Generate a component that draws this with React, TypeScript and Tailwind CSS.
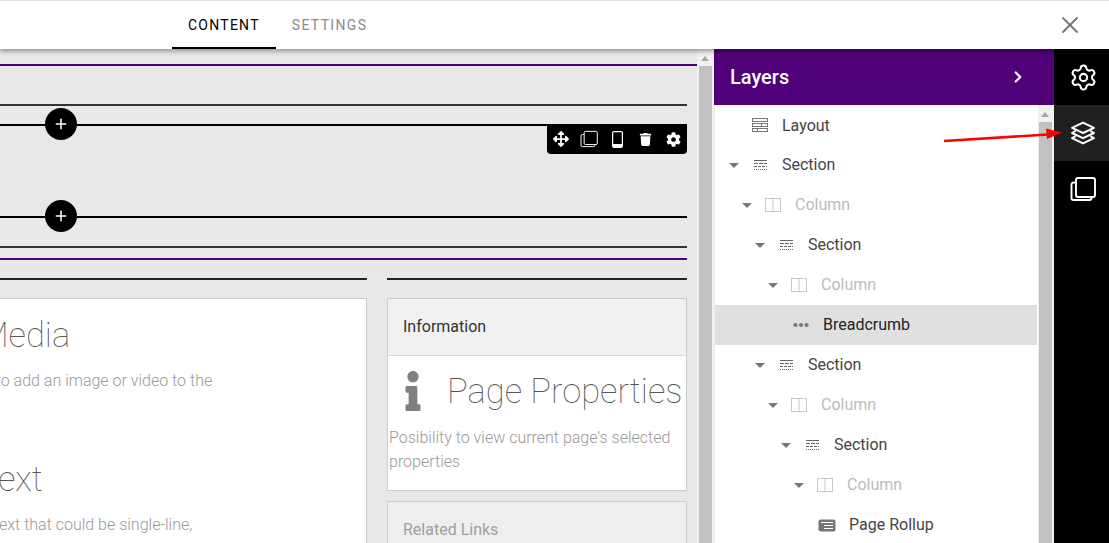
import React from 'react';
import { ChevronRight, Plus, Settings, X } from 'lucide-react';
import { FaArrowsAlt, FaCog, FaInfo, FaTrash } from 'react-icons/fa';

type Kind = 'layout' | 'section' | 'column' | 'breadcrumb' | 'rollup';

const rows: { label: string; kind: Kind; depth: number; caret?: boolean; active?: boolean }[] = [
  { label: 'Layout', kind: 'layout', depth: 0 },
  { label: 'Section', kind: 'section', depth: 0, caret: true },
  { label: 'Column', kind: 'column', depth: 1, caret: true },
  { label: 'Section', kind: 'section', depth: 2, caret: true },
  { label: 'Column', kind: 'column', depth: 3, caret: true },
  { label: 'Breadcrumb', kind: 'breadcrumb', depth: 3, active: true },
  { label: 'Section', kind: 'section', depth: 2, caret: true },
  { label: 'Column', kind: 'column', depth: 3, caret: true },
  { label: 'Section', kind: 'section', depth: 4, caret: true },
  { label: 'Column', kind: 'column', depth: 5, caret: true },
  { label: 'Page Rollup', kind: 'rollup', depth: 5 },
];

function TreeIcon({ kind }: { kind: Kind }) {
  if (kind === 'layout') {
    return (
      <svg width="16" height="14" viewBox="0 0 16 14" fill="none" stroke="#777" strokeWidth="1">
        <rect x="0.5" y="0.5" width="15" height="3" />
        <rect x="0.5" y="5.5" width="15" height="3" />
        <rect x="0.5" y="10.5" width="15" height="3" />
        <path d="M9.5 5.5v3M5.5 10.5v3" />
      </svg>
    );
  }
  if (kind === 'section') {
    return (
      <svg width="13" height="10" viewBox="0 0 13 10" fill="none" stroke="#666" strokeWidth="1">
        <path d="M0 0.5h13" />
        <path d="M0 3.5h13" strokeDasharray="4 1" />
        <path d="M0 6.5h13" strokeDasharray="3 1" />
        <path d="M0 9.5h13" strokeDasharray="1 1" />
      </svg>
    );
  }
  if (kind === 'column') {
    return (
      <svg width="16" height="14" viewBox="0 0 16 14" fill="none" stroke="#c8c8c8" strokeWidth="1">
        <rect x="0.5" y="0.5" width="15" height="13" />
        <path d="M8 0.5v13" />
      </svg>
    );
  }
  if (kind === 'breadcrumb') {
    return (
      <svg width="16" height="6" viewBox="0 0 16 6" fill="#777">
        <circle cx="2.5" cy="3" r="2.1" />
        <circle cx="8" cy="3" r="2.1" />
        <circle cx="13.5" cy="3" r="2.1" />
      </svg>
    );
  }
  return (
    <svg width="18" height="13" viewBox="0 0 18 13" fill="none">
      <rect x="0.5" y="0.5" width="17" height="12" rx="2" fill="#777" />
      <path d="M3 3.5h12M6 6.5h9M6 9.5h9" stroke="#fff" strokeWidth="1" />
    </svg>
  );
}

function CopyIcon({ size, width }: { size: number; width: number }) {
  return (
    <svg width={size} height={size} viewBox="0 0 26 26" fill="none" stroke="currentColor" strokeWidth={width} strokeLinejoin="round">
      <rect x="6" y="2" width="19" height="19" rx="2" />
      <path d="M6 6.5H3.5a2 2 0 0 0-2 2V22a2 2 0 0 0 2 2h16a2 2 0 0 0 2-2v-1" />
    </svg>
  );
}

function AddLine() {
  return (
    <div className="relative h-[2px] bg-black">
      <div className="absolute left-[45px] top-[-16px] flex h-8 w-8 items-center justify-center rounded-full bg-black text-white">
        <Plus size={16} strokeWidth={2.3} />
      </div>
    </div>
  );
}

export default function App() {
  return (
    <div className="relative flex h-[543px] w-[1109px] flex-col overflow-hidden bg-white [font-family:Roboto,sans-serif]">
      <header className="relative z-10 flex h-[49px] shrink-0 items-stretch border-t border-[#dfdfe3] bg-white pl-[172px] shadow-[0_2px_5px_rgba(0,0,0,0.4)]">
        <div className="flex items-center border-b-2 border-black px-4 pt-[2px] text-[14px] font-[450] tracking-[1.25px] text-black">CONTENT</div>
        <div className="flex items-center border-b-2 border-transparent px-4 pt-[2px] text-[14px] font-[450] tracking-[1.35px] text-[#8a8a8a]">SETTINGS</div>
        <button className="ml-auto mr-[25px] flex items-center text-[#777]">
          <X size={28} strokeWidth={1.6} />
        </button>
      </header>

      <main className="flex min-h-0 flex-1">
        {/* page canvas, cut off on the left like the real editor */}
        <section className="w-[697px] shrink-0 overflow-hidden bg-[#e8e8e8] pt-[15px]">
          <div className="h-[2px] bg-[#4b0082]" />
          <div className="pr-[10px]">
            <div className="mt-[38px] h-[2px] bg-[#333]" />
            <div className="relative mt-[18px]">
              <AddLine />
              <div className="absolute right-0 top-0 flex h-[30px] w-[140px] items-center rounded-b-[4px] bg-black text-white">
                <span className="flex w-7 justify-center"><FaArrowsAlt size={16} /></span>
                <span className="flex w-7 justify-center"><CopyIcon size={18} width={1.4} /></span>
                <span className="flex w-7 justify-center">
                  <svg width="11" height="17" viewBox="0 0 11 17" fill="none">
                    <rect x="0.6" y="0.6" width="9.8" height="15.8" rx="1.5" stroke="#fff" strokeWidth="1.2" />
                    <rect x="1" y="13" width="9" height="3" fill="#fff" />
                  </svg>
                </span>
                <span className="flex w-7 justify-center"><FaTrash size={13} /></span>
                <span className="flex w-7 justify-center"><FaCog size={15} /></span>
              </div>
            </div>
            <div className="mt-[90px]"><AddLine /></div>
            <div className="mt-[28px] h-[2px] bg-[#333]" />
            <div className="mt-[10px] h-[2px] bg-[#4b0082]" />

            <div className="mt-[18px] flex gap-5">
              <div className="ml-[-60px] w-[427px] shrink-0">
                <div className="h-[2px] bg-[#222]" />
                <div className="mt-[18px] h-[300px] border border-[#ccc] bg-white pl-[17px] font-light text-[#999]">
                  <h2 className="ml-[21px] mt-[14px] text-[34.5px] font-thin leading-[44px] text-[#555]">Media</h2>
                  <p className="ml-[-29px] mt-[12px] text-[16px] leading-6">Posibility to add an image or video to the</p>
                  <h2 className="ml-[21px] mt-[64px] text-[34.5px] font-thin leading-[44px] text-[#555]">Text</h2>
                  <p className="ml-[-9px] mt-[12px] text-[16px] leading-6">A free text that could be single-line,<br />multi-line</p>
                </div>
              </div>
              <div className="min-w-0 flex-1">
                <div className="h-[2px] bg-[#222]" />
                <div className="mt-[18px] h-[193px] border border-[#ccc] bg-white">
                  <div className="flex h-[57px] items-center border-b border-[#d8d8d8] bg-[#f1f1f1] pl-[15px] text-[16px] text-[#333]">Information</div>
                  <div className="flex h-[68px] items-center">
                    <span className="ml-[13px] flex w-[24px] justify-center pt-[2px] text-[#808080]"><FaInfo size={40} /></span>
                    <span className="ml-[22px] whitespace-nowrap pt-[4px] text-[34.5px] font-thin text-[#555]">Page Properties</span>
                  </div>
                  <p className="pl-px pt-[2px] text-[16px] font-light leading-6 text-[#999]">Posibility to view current page's selected properties</p>
                </div>
                <div className="mt-[10px] h-[60px] border border-[#ccc] bg-[#eee] pl-[15px] pt-[16px] text-[16px] text-[#a0a0a0]">Related Links</div>
              </div>
            </div>
          </div>
        </section>

        <div className="relative w-[17px] shrink-0 bg-[#f1f1f1]">
          <div className="absolute left-[4px] top-[7px] h-0 w-0 border-x-[4.5px] border-b-[5px] border-x-transparent border-b-[#a8a8a8]" />
          <div className="ml-[2px] mt-[17px] h-full w-[13px] bg-[#c1c1c1]" />
        </div>

        {/* layers panel */}
        <aside className="flex w-[340px] shrink-0 flex-col">
          <div className="flex h-[56px] shrink-0 items-center justify-between bg-[#500078] pl-4 pr-[27px] text-white">
            <span className="text-[20px] font-medium">Layers</span>
            <ChevronRight size={18} strokeWidth={3} />
          </div>
          <div className="flex min-h-0 flex-1">
            <div className="min-w-0 flex-1 overflow-hidden border-l border-[#eee] pr-px">
              {rows.map((row, i) => (
                <div key={i} className={`flex h-10 items-center ${row.active ? 'bg-[#e0e0e0]' : ''}`} style={{ paddingLeft: 14 + row.depth * 13 }}>
                  <span className="flex w-[16px] shrink-0">
                    {row.caret && (
                      <svg width="10" height="5" viewBox="0 0 10 5" fill="#777"><path d="M0 0h10L5 5z" /></svg>
                    )}
                  </span>
                  <span className={`flex h-full w-[30px] shrink-0 items-center justify-center ${row.kind === 'breadcrumb' || row.kind === 'rollup' ? 'ml-[2px]' : ''}`}>
                    <TreeIcon kind={row.kind} />
                  </span>
                  <span className={`ml-[7px] whitespace-nowrap text-[16px] ${row.kind === 'layout' ? 'mt-[2px]' : ''} ${row.kind === 'column' ? 'text-[#bbb]' : row.active ? 'text-[#222]' : 'text-[#444]'}`}>{row.label}</span>
                </div>
              ))}
            </div>
            <div className="relative w-[16px] shrink-0 bg-[#f1f1f1]">
              <div className="absolute left-[3px] top-[7px] h-0 w-0 border-x-[4.5px] border-b-[5px] border-x-transparent border-b-[#a8a8a8]" />
              <div className="ml-px mt-[17px] h-full w-[13px] bg-[#c1c1c1]" />
            </div>
          </div>
        </aside>

        {/* icon rail */}
        <nav className="flex w-[55px] shrink-0 flex-col bg-black text-white">
          <div className="flex h-14 items-center justify-center pl-[3px]"><Settings size={29} strokeWidth={1.7} /></div>
          <div className="flex h-14 items-center justify-center bg-[#202020] pl-[3px]">
            <svg width="26" height="24" viewBox="0 0 24 23" fill="none" stroke="currentColor" strokeWidth="1.9" strokeLinejoin="round">
              <path d="M12 1.5 22.5 6.5 12 11.5 1.5 6.5Z" />
              <path d="M5 9.5 1.5 11.5 12 16.5 22.5 11.5 19 9.5" />
              <path d="M5 14.5 1.5 16.5 12 21.5 22.5 16.5 19 14.5" />
            </svg>
          </div>
          <div className="flex h-14 items-center justify-center pl-[3px]"><CopyIcon size={26} width={1.9} /></div>
        </nav>
      </main>

      {/* annotation arrow on top of the screenshot */}
      <svg className="absolute left-[940px] top-[125px]" width="125" height="20" viewBox="0 0 125 20">
        <path d="M4 16 108 9.5" stroke="#f00" strokeWidth="2.5" />
        <path d="M106 3.5 122 7.5 107 14Z" fill="#f00" />
      </svg>
    </div>
  );
}
